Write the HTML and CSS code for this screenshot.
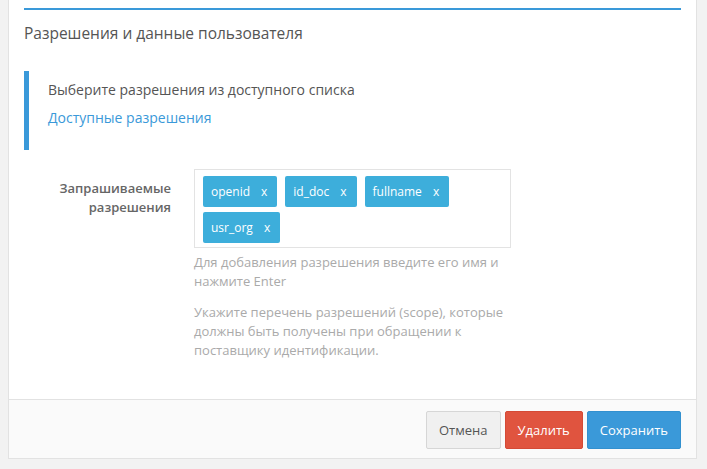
FILE: index.html
```html
<!DOCTYPE html>
<html lang="ru">
<head>
<meta charset="utf-8">
<link rel="stylesheet" href="styles.css">
</head>
<body>
<div class="panel">
  <div class="panel-body">
    <div class="rule"></div>
    <h3 class="title">Разрешения и данные пользователя</h3>
    <div class="callout">
      <p class="callout-text">Выберите разрешения из доступного списка</p>
      <a class="callout-link" href="#">Доступные разрешения</a>
    </div>
    <div class="form-row">
      <label class="form-label">Запрашиваемые разрешения</label>
      <div class="form-field">
        <div class="tags-input">
          <span class="tag">openid<span class="tag-x">x</span></span>
          <span class="tag">id_doc<span class="tag-x">x</span></span>
          <span class="tag">fullname<span class="tag-x">x</span></span>
          <span class="tag">usr_org<span class="tag-x">x</span></span>
        </div>
        <p class="help">Для добавления разрешения введите его имя и нажмите Enter</p>
        <p class="help">Укажите перечень разрешений (scope), которые должны быть получены при обращении к поставщику идентификации.</p>
      </div>
    </div>
  </div>
  <div class="panel-footer">
    <button class="btn btn-default">Отмена</button>
    <button class="btn btn-danger">Удалить</button>
    <button class="btn btn-primary">Сохранить</button>
  </div>
</div>
</body>
</html>
```
FILE: styles.css
```css
html, body {
  margin: 0;
  padding: 0;
  background: #f2f2f2;
  font-family: "Open Sans", "Noto Sans", sans-serif;
  font-size: 13px;
  color: #555;
}
.panel {
  margin: 0 10px 0 8px;
  background: #fff;
  border: 1px solid #e2e2e2;
  border-top: none;
}
.panel-body {
  padding: 8px 15px 39px;
}
.rule {
  height: 2px;
  background: #3a99d9;
}
.title {
  margin: 13px 0 0;
  font-size: 15.5px;
  font-weight: 400;
  color: #555;
  line-height: 20px;
}
.callout {
  margin-top: 28px;
  border-left: 5px solid #3a99d9;
  padding: 9px 20px 22px 19px;
}
.callout-text {
  margin: 0;
  font-size: 14px;
  line-height: 20px;
}
.callout-link {
  display: block;
  margin-top: 8px;
  font-size: 14px;
  line-height: 20px;
  color: #3a99d9;
  text-decoration: none;
}
.form-row {
  display: flex;
  margin-top: 19px;
}
.form-label {
  width: 147px;
  flex: none;
  text-align: right;
  font-weight: 600;
  color: #666;
  line-height: 19px;
  padding-top: 10px;
  margin-right: 23px;
}
.form-field {
  width: 317px;
}
.tags-input {
  border: 1px solid #e3e3e3;
  padding: 6px 8px 4px 8px;
  display: flex;
  flex-wrap: wrap;
  gap: 5px 8px;
}
.tag {
  display: inline-flex;
  align-items: center;
  background: #3daedb;
  color: #fff;
  border-radius: 2px;
  height: 31px;
  padding: 0 10px 0 8px;
  font-size: 12px;
  line-height: 20px;
}
.tag-x {
  margin-left: 11px;
}
.help {
  margin: 5px 0 0;
  color: #aaa;
  line-height: 19px;
}
.help + .help {
  margin-top: 12px;
}
.panel-footer {
  background: #fafafa;
  border-top: 1px solid #e2e2e2;
  padding: 11px 15px 9px;
  display: flex;
  justify-content: flex-end;
  gap: 4px;
}
.btn {
  font-family: inherit;
  font-size: 13px;
  height: 38px;
  padding: 0 12px;
  border: 1px solid transparent;
  border-radius: 2px;
  cursor: pointer;
}
.btn-default {
  background: #f0f0f0;
  border-color: #d6d6d6;
  color: #555;
}
.btn-danger {
  background: #e0543f;
  border-color: #d44a36;
  color: #fff;
}
.btn-primary {
  background: #3a99d9;
  border-color: #3290cf;
  color: #fff;
}
```
